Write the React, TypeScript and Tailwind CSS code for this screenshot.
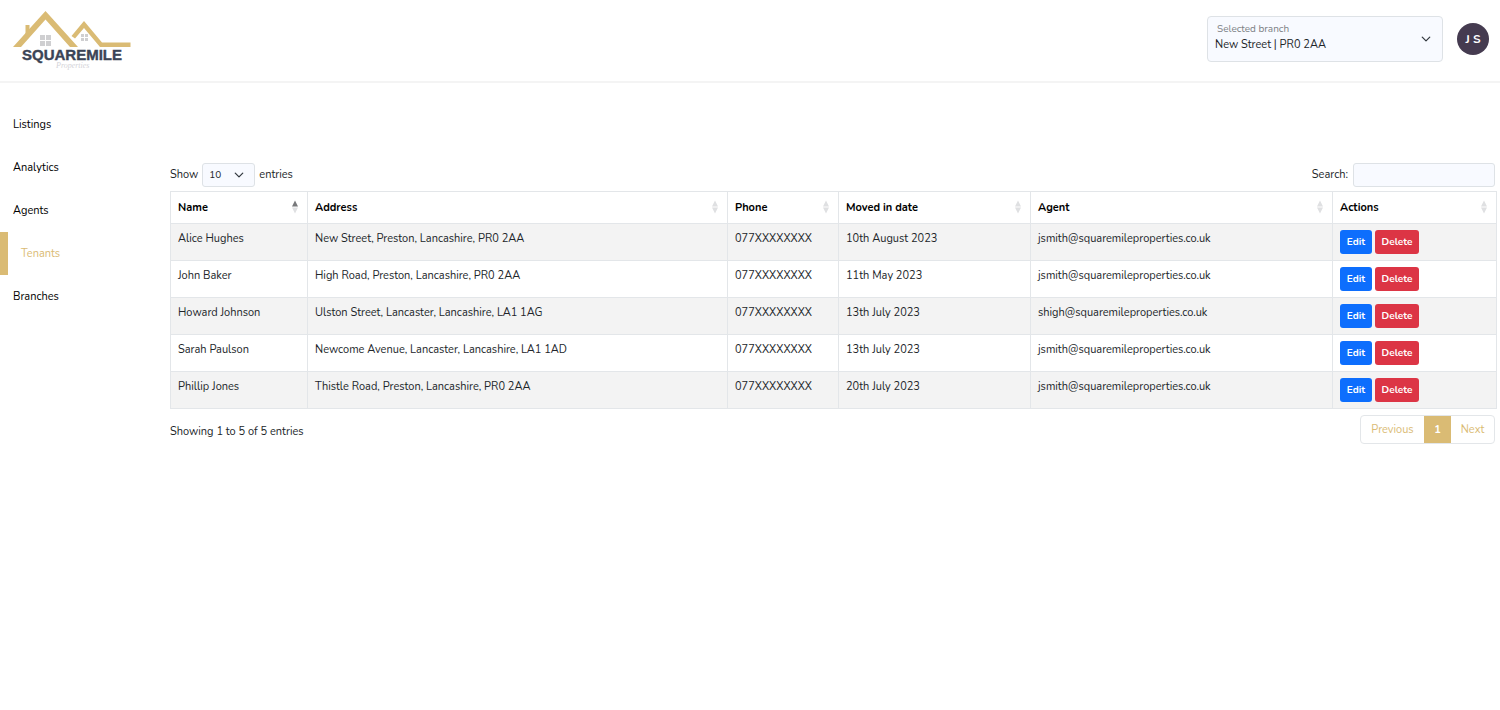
import { useState } from "react";

const navItems = ["Listings", "Analytics", "Agents", "Tenants", "Branches"];

const columns = [
  { label: "Name", width: "w-[137px]" },
  { label: "Address", width: "w-auto" },
  { label: "Phone", width: "w-[111px]" },
  { label: "Moved in date", width: "w-[192px]" },
  { label: "Agent", width: "w-[302px]" },
  { label: "Actions", width: "w-[164px]" },
];

const tenants = [
  { name: "Alice Hughes", address: "New Street, Preston, Lancashire, PR0 2AA", phone: "077XXXXXXXX", moved: "10th August 2023", agent: "jsmith@squaremileproperties.co.uk" },
  { name: "John Baker", address: "High Road, Preston, Lancashire, PR0 2AA", phone: "077XXXXXXXX", moved: "11th May 2023", agent: "jsmith@squaremileproperties.co.uk" },
  { name: "Howard Johnson", address: "Ulston Street, Lancaster, Lancashire, LA1 1AG", phone: "077XXXXXXXX", moved: "13th July 2023", agent: "shigh@squaremileproperties.co.uk" },
  { name: "Sarah Paulson", address: "Newcome Avenue, Lancaster, Lancashire, LA1 1AD", phone: "077XXXXXXXX", moved: "13th July 2023", agent: "jsmith@squaremileproperties.co.uk" },
  { name: "Phillip Jones", address: "Thistle Road, Preston, Lancashire, PR0 2AA", phone: "077XXXXXXXX", moved: "20th July 2023", agent: "jsmith@squaremileproperties.co.uk" },
];

function Logo() {
  return (
    <svg width="120" height="62" viewBox="0 0 120 62" role="img" aria-label="Squaremile Properties">
      <path d="M12.500 25V15h4v6" fill="#dabb74" />
      <path d="M0 37 32.500 1 65 37h-8L32.500 9.500 8 37Z" fill="#dabb74" />
      <path d="M58.500 26 71 11 89 32.500h28.500V37H87L71 18 62 28.500Z" fill="#dabb74" />
      <path d="M27 25h5v5h-5zM33 25h5v5h-5zM27 31h5v5h-5zM33 31h5v5h-5z" fill="#cfcfd1" />
      <path d="M68 24h3v3h-3zM72 24h3v3h-3zM68 28h3v3h-3zM72 28h3v3h-3z" fill="#cfcfd1" />
      <text x="9" y="50" fontSize="15" className="fill-[#3b4456] stroke-[#3b4456] font-['Liberation_Sans',sans-serif] font-bold" strokeWidth="0.400">
        SQUAREMILE
      </text>
      <text x="43" y="58" fontSize="8" className="fill-[#d3d3d8] font-['Liberation_Serif',serif] italic">
        Properties
      </text>
    </svg>
  );
}

function Chevron() {
  return (
    <svg width="10" height="10" viewBox="0 0 16 16" fill="none" stroke="#343a40" strokeWidth="2" strokeLinecap="round" strokeLinejoin="round" className="pointer-events-none col-start-1 row-start-1 self-center justify-self-end" aria-hidden="true">
      <path d="m2 5 6 6 6-6" />
    </svg>
  );
}

function SortIcon({ ascending }: { ascending: boolean }) {
  return (
    <svg width="8" height="14" viewBox="0 0 8 14" aria-hidden="true" className="-mt-0.5">
      <path d="M4 .5 7 6.500H1Z" fill={ascending ? "#77787b" : "#dfe0e2"} />
      <path d="M4 13.500 1 7.500h6Z" fill="#dfe0e2" />
    </svg>
  );
}

export default function App() {
  const [active, setActive] = useState("Tenants");

  return (
    <div className="min-h-screen bg-white font-['Nunito','Open_Sans',sans-serif] text-[11px] leading-4 text-[#212529]">
      <header className="flex items-center justify-between border-b-2 border-[#f4f4f4] pt-2.5 pr-[11px] pb-[9px] pl-[13px]">
        <a href="#home">
          <Logo />
        </a>
        <div className="-mt-1 flex items-center gap-3.5">
          <div className="grid w-[236px] rounded border border-[#dee2e6] bg-[#f8faff]">
            <label htmlFor="branch" className="pointer-events-none z-10 col-start-1 row-start-1 self-start pt-1 pl-[9px] text-[10px] text-[#7b7f84]">
              Selected branch
            </label>
            <select id="branch" className="col-start-1 row-start-1 h-11 appearance-none bg-transparent pt-3 pr-8 pl-[7px]">
              <option>New Street | PR0 2AA</option>
            </select>
            <div className="pointer-events-none col-start-1 row-start-1 grid pr-[11px]">
              <Chevron />
            </div>
          </div>
          <button className="size-8 rounded-full bg-[#453b50] text-[12px] font-bold text-white">J S</button>
        </div>
      </header>

      <div className="flex">
        <nav className="w-[170px] shrink-0 pt-5">
          <ul>
            {navItems.map((item) => (
              <li key={item}>
                <a
                  href={`#${item.toLowerCase()}`}
                  onClick={() => setActive(item)}
                  className={
                    item === active
                      ? "flex h-[43px] items-center border-l-8 border-[#dabb74] pl-[13px] text-[#dabb74]"
                      : "flex h-[43px] items-center pl-[13px] text-black"
                  }
                >
                  {item}
                </a>
              </li>
            ))}
          </ul>
        </nav>

        <main className="min-w-0 flex-1 pt-20 pr-[3px]">
          <div className="flex items-center justify-between pr-0.5 pb-1">
            <label className="flex items-center gap-1">
              Show
              <span className="grid w-[53px] rounded-[3px] border border-[#dee2e6] bg-[#f8faff] pr-2.5">
                <select className="col-start-1 row-start-1 h-[22px] appearance-none bg-transparent pl-1.5 text-[10px]">
                  <option>10</option>
                  <option>25</option>
                </select>
                <Chevron />
              </span>
              entries
            </label>
            <label className="flex items-center gap-[5px]">
              Search:
              <input type="search" className="h-6 w-[142px] rounded-[3px] border border-[#dee2e6] bg-[#f8faff] px-2" />
            </label>
          </div>

          <table className="w-full table-fixed border-collapse">
            <thead>
              <tr className="h-8">
                {columns.map((column, i) => (
                  <th key={column.label} className={`${column.width} border border-[#e3e6e9] pr-2 pl-[7px] text-left font-bold text-black`}>
                    <div className="flex items-center justify-between">
                      {column.label}
                      <SortIcon ascending={i === 0} />
                    </div>
                  </th>
                ))}
              </tr>
            </thead>
            <tbody>
              {tenants.map((tenant) => (
                <tr key={tenant.name} className="h-[37px] align-top odd:bg-[#f3f3f3]">
                  <td className="border border-[#e3e6e9] px-[7px] pt-[7px]">{tenant.name}</td>
                  <td className="border border-[#e3e6e9] px-[7px] pt-[7px]">{tenant.address}</td>
                  <td className="border border-[#e3e6e9] px-[7px] pt-[7px]">{tenant.phone}</td>
                  <td className="border border-[#e3e6e9] px-[7px] pt-[7px]">{tenant.moved}</td>
                  <td className="border border-[#e3e6e9] px-[7px] pt-[7px]">{tenant.agent}</td>
                  <td className="border border-[#e3e6e9] px-[7px] pt-1.5">
                    <div className="flex gap-[3px] text-[10px] font-bold text-white">
                      <button className="h-6 w-8 rounded-[3px] bg-[#0d6efd]">Edit</button>
                      <button className="h-6 w-11 rounded-[3px] bg-[#dc3545]">Delete</button>
                    </div>
                  </td>
                </tr>
              ))}
            </tbody>
          </table>

          <div className="flex items-start justify-between pt-1.5 pr-0.5">
            <p className="pt-[9px]">Showing 1 to 5 of 5 entries</p>
            <div className="flex h-[29px] overflow-hidden rounded border border-[#e3e6e9] text-[#dabb74]">
              <button className="w-[63px]">Previous</button>
              <button className="w-[27px] bg-[#dabb74] font-bold text-white">1</button>
              <button className="w-[43px]">Next</button>
            </div>
          </div>
        </main>
      </div>
    </div>
  );
}
